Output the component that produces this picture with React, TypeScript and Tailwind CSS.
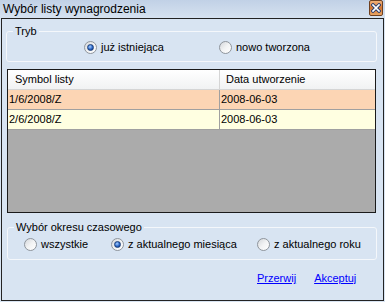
import React from 'react';

const font = { fontFamily: '"Liberation Sans", Arial, sans-serif' };

function Radio({ checked }: { checked?: boolean }) {
  return (
    <span className="relative flex h-[13px] w-[13px] shrink-0 items-center justify-center rounded-full border border-[#8f959c] bg-gradient-to-br from-[#d4d7db] via-[#f2f3f4] to-white">
      {checked && (
        <span className="h-[7px] w-[7px] rounded-full border border-[#1b3f7a] bg-[radial-gradient(circle_at_40%_35%,#a9d0ff,#2a66c8_55%,#0d2f6e)]" />
      )}
    </span>
  );
}

function Option({ label, checked, width }: { label: string; checked?: boolean; width: string }) {
  return (
    <div className={`flex items-center gap-[4px] ${width}`}>
      <Radio checked={checked} />
      <span className="leading-[13px] text-black">{label}</span>
    </div>
  );
}

function Group({ title, className, children }: { title: string; className: string; children: React.ReactNode }) {
  return (
    <div className={`relative rounded-[3px] border border-[#f4f7fb] ${className}`}>
      <span className="absolute left-[6px] top-[-7px] bg-[#d8e4f2] px-[2px] leading-[13px] text-black">{title}</span>
      {children}
    </div>
  );
}

const rows = [
  { symbol: '1/6/2008/Z', date: '2008-06-03', bg: 'bg-[#fcd5b4]' },
  { symbol: '2/6/2008/Z', date: '2008-06-03', bg: 'bg-[#ffffe1]' },
];

export default function App() {
  return (
    <div className="flex h-[302px] w-[385px] flex-col bg-[#d8e4f2] text-[11px]" style={font}>
      {/* title bar */}
      <div className="flex h-[18px] items-center bg-gradient-to-b from-[#c1d1e6] to-[#d6e2f0] pl-[3px]">
        <span className="text-[12px] leading-[14px] text-black">Wybór listy wynagrodzenia</span>
        <div className="ml-auto mr-[2px] flex h-[16px] w-[14px] items-center justify-center self-start rounded-[2px] border border-[#6e3f1f] bg-gradient-to-b from-[#f0b27a] via-[#d2742f] to-[#e8a564]">
          <svg width="10" height="10" viewBox="0 0 10 10">
            <path d="M2 2 L8 8 M8 2 L2 8" stroke="#243a6e" strokeWidth="3.4" strokeLinecap="square" />
            <path d="M2 2 L8 8 M8 2 L2 8" stroke="#ffffff" strokeWidth="1.7" strokeLinecap="square" />
          </svg>
        </div>
      </div>

      {/* client area */}
      <div className="mx-[1px] mb-[1px] flex flex-1 flex-col border border-[#232323] bg-[#d8e4f2]">
        <Group title="Tryb" className="ml-[4px] mt-[12px] h-[31px] w-[371px]">
          <div className="flex pl-[77px] pt-[9px]">
            <Option label="już istniejąca" checked width="w-[135px]" />
            <Option label="nowo tworzona" width="w-[120px]" />
          </div>
        </Group>

        {/* grid */}
        <div className="ml-[5px] mt-[7px] flex h-[144px] w-[369px] flex-col border border-[#1a1a1a] bg-[#ababab]">
          <div className="flex h-[20px] border-b border-[#d5d5d5] bg-gradient-to-b from-white to-[#f1f2f3]">
            <div className="flex w-[212px] items-center border-r border-[#d5d5d5] pl-[7px] text-black">Symbol listy</div>
            <div className="flex flex-1 items-center pl-[6px] text-black">Data utworzenie</div>
          </div>
          {rows.map((r) => (
            <div key={r.symbol} className={`flex h-[20px] border-b border-[#a0a0a0] ${r.bg}`}>
              <div className="flex w-[212px] items-center border-r border-[#a0a0a0] pl-[1px] text-black">{r.symbol}</div>
              <div className="flex flex-1 items-center pl-[1px] text-black">{r.date}</div>
            </div>
          ))}
        </div>

        <Group title="Wybór okresu czasowego" className="ml-[5px] mt-[14px] h-[33px] w-[370px]">
          <div className="flex pl-[16px] pt-[10px]">
            <Option label="wszystkie" width="w-[87px]" />
            <Option label="z aktualnego miesiąca" checked width="w-[146px]" />
            <Option label="z aktualnego roku" width="w-[110px]" />
          </div>
        </Group>

        <div className="ml-[255px] mt-[12px] flex gap-[18px] leading-[13px]">
          <a className="cursor-pointer text-[#0000ff] underline">Przerwij</a>
          <a className="cursor-pointer text-[#0000ff] underline">Akceptuj</a>
        </div>
      </div>
    </div>
  );
}
